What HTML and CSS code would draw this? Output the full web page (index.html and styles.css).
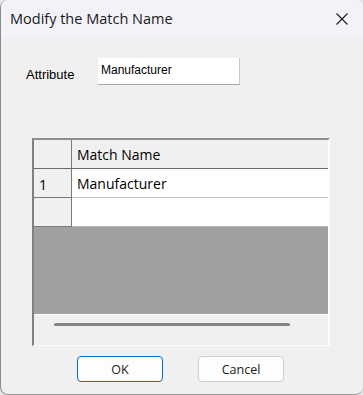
FILE: index.html
```html
<!DOCTYPE html>
<html lang="en">
<head>
    <meta charset="UTF-8">
    <title>Modify the Match Name</title>
    <link rel="stylesheet" href="styles.css">
</head>
<body>
    <div class="dialog">
        <div class="titlebar">
            <span class="title">Modify the Match Name</span>
            <svg class="close" width="12" height="12" viewBox="0 0 12 12">
                <path d="M0.5 0.5 L11.5 11.5 M11.5 0.5 L0.5 11.5" stroke="#1a1a1a" stroke-width="1.1" fill="none"/>
            </svg>
        </div>

        <div class="content">
            <!-- attribute field -->
            <div class="field">
                <label class="field-label" for="attr">Attribute</label>
                <div class="field-input" id="attr">Manufacturer</div>
            </div>

            <!-- match name grid -->
            <div class="grid">
                <div class="row head">
                    <div class="rowhead"></div>
                    <div class="cell">Match Name</div>
                </div>
                <div class="row">
                    <div class="rowhead">1</div>
                    <div class="cell">Manufacturer</div>
                </div>
                <div class="row last">
                    <div class="rowhead"></div>
                    <div class="cell"></div>
                </div>
                <div class="empty"></div>
                <div class="hscroll"><div class="thumb"></div></div>
            </div>

            <div class="buttons">
                <button class="btn default">OK</button>
                <button class="btn">Cancel</button>
            </div>
        </div>
    </div>
</body>
</html>
```

FILE: styles.css
```css
html, body { margin: 0; padding: 0; }
body { background: #e6e6e6; font-family: "Open Sans", "Noto Sans", sans-serif; width: 363px; height: 395px; overflow: hidden; }

.dialog { box-sizing: border-box; width: 363px; height: 395px; background: #f0f0f0; border-left: 1px solid #8a8a8a; border-bottom: 1px solid #9a9a9a; border-radius: 8px; overflow: hidden; display: flex; flex-direction: column; }

.titlebar { height: 38px; flex: none; background: #f3f2f8; display: flex; align-items: center; justify-content: space-between; padding: 0 15px 0 9px; }
.title { font-size: 14.5px; color: #1a1a1a; margin-top: -2px; }
.close { display: block; margin-top: -1px; }

.content { flex: 1; display: flex; flex-direction: column; }

.field { display: flex; align-items: center; margin-top: 20px; padding-left: 25px; height: 27px; }
.field-label { width: 72px; font-family: "Liberation Sans", Arial, sans-serif; font-size: 13px; color: #000; padding-top: 5px; }
.field-input { box-sizing: border-box; width: 142px; height: 27px; background: #fff; border-right: 1px solid #c8c8c8; border-bottom: 1px solid #a8a8a8; font-family: "Liberation Sans", Arial, sans-serif; font-size: 12px; padding: 5px 0 0 3px; color: #000; }

.grid { box-sizing: border-box; margin: 53px 0 0 31px; width: 298px; height: 208px; border-top: 2px solid #8e8e8e; border-left: 2px solid #808080; border-right: 2px solid #fbfbfb; border-bottom: 1px solid #fbfbfb; display: flex; flex-direction: column; background: #fff; }
.row { display: flex; height: 29px; flex: none; }
.rowhead { box-sizing: border-box; width: 38px; background: #f0f0f0; border-right: 1px solid #7a7a7a; border-bottom: 1px solid #7a7a7a; font-size: 14px; padding: 6px 0 0 5px; color: #000; }
.cell { box-sizing: border-box; flex: 1; border-bottom: 1px solid #c4c4c4; font-size: 14px; padding: 5px 0 0 5px; color: #000; }
.head .rowhead, .head .cell { background: #f0f0f0; border-bottom-color: #6b6b6b; }
.last .cell { border-bottom-color: #b8b8b8; }
.empty { flex: 1; background: #a0a0a0; }
.hscroll { box-sizing: border-box; height: 31px; flex: none; background: #f0f0f0; border-top: 1px solid #fafafa; padding: 8px 0 0 20px; }
.thumb { width: 236px; height: 3px; border-radius: 2px; background: #868686; }

.buttons { display: flex; gap: 35px; padding-left: 76px; margin-top: 10px; }
.btn { box-sizing: border-box; width: 86px; height: 26px; background: #fdfdfd; border: 1px solid #d0d0d0; border-radius: 4px; font-family: "Open Sans", "Noto Sans", sans-serif; font-size: 12.5px; color: #1a1a1a; padding: 0; }
.btn.default { border-color: #0f6cbd; }
```
